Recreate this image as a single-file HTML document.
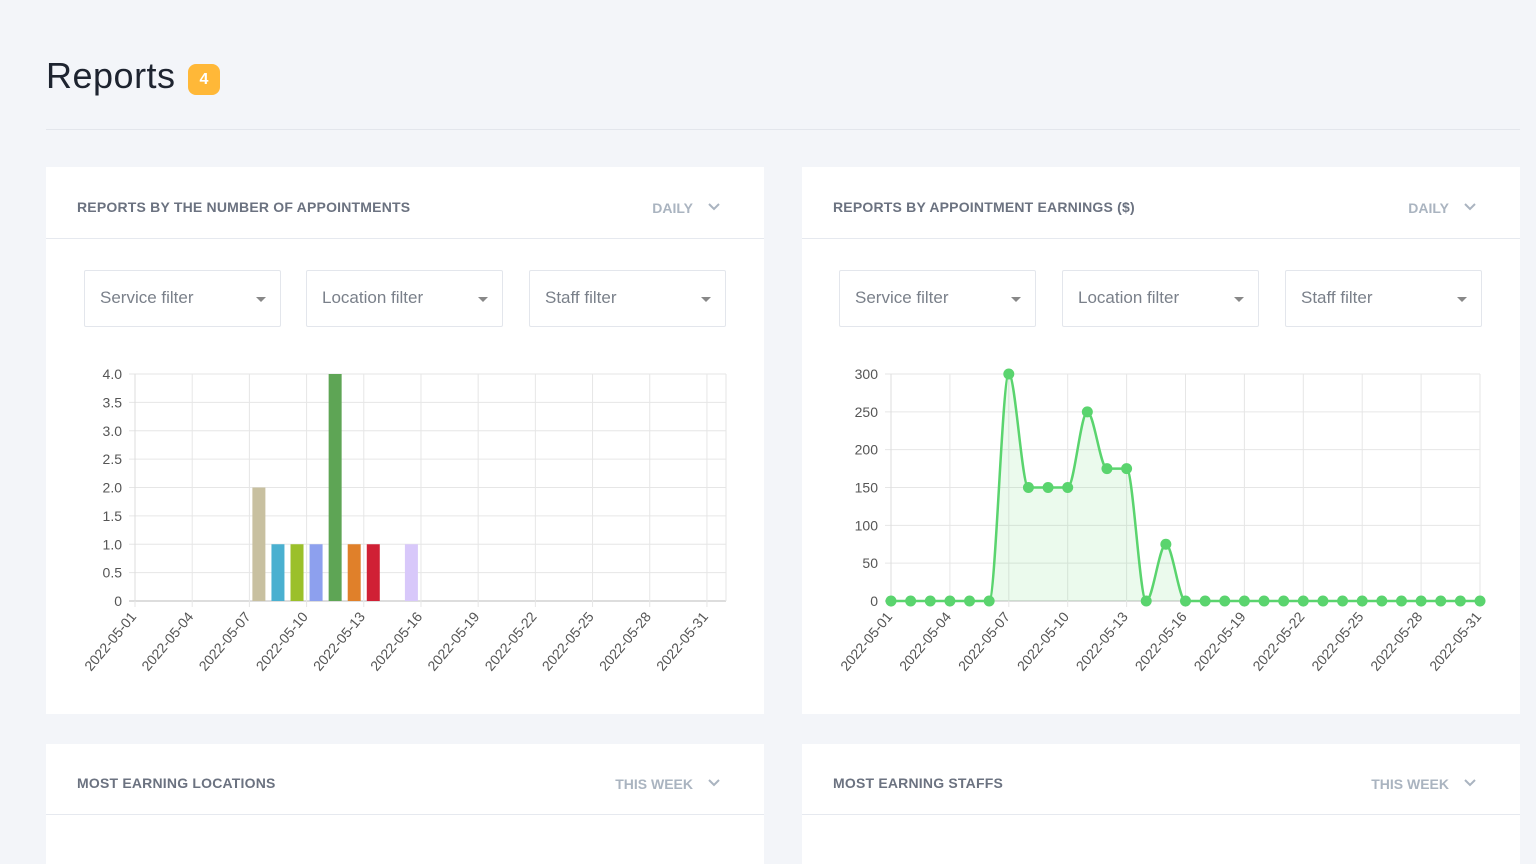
<!DOCTYPE html>
<html><head><meta charset="utf-8"><style>
*{box-sizing:border-box;margin:0;padding:0}
body{width:1536px;height:842px;overflow:hidden;background:#f3f5f9;font-family:"Liberation Sans",sans-serif;position:relative}
h1{position:absolute;left:46px;top:55px;font-weight:400;font-size:36px;color:#1e2430;letter-spacing:0.5px}
.badge{position:absolute;left:188px;top:64px;width:32px;height:31px;background:#ffb838;border-radius:8px;color:#fff;font-size:16px;font-weight:700;text-align:center;line-height:31px}
.hr{position:absolute;left:46px;right:16px;top:129px;height:1px;background:#e3e6ec}
.card{position:absolute;background:#fff;width:718px}
.ch{height:72px;border-bottom:1px solid #e6e9ef;position:relative}
.ct{position:absolute;left:31px;top:32px;font-size:14px;font-weight:700;color:#6b7280;letter-spacing:0.2px}
.cd{position:absolute;right:71px;top:33px;font-size:14px;font-weight:700;color:#aab4c0}
.cd svg{position:absolute;right:-28px;top:0}
.sel{position:absolute;top:103px;width:197px;height:57px;border:1px solid #e3e6ec;border-radius:2px;font-size:17px;color:#7a808a;padding:17px 0 0 15px}
.sel:after{content:"";position:absolute;right:14px;top:26px;border:5px solid transparent;border-top:5px solid #888;border-bottom:0}
svg text{font-family:"Liberation Sans",sans-serif;font-size:14px;fill:#555}
</style></head><body>
<h1>Reports</h1><div class="badge">4</div><div class="hr"></div>

<div class="card" style="left:46px;top:167px;height:547px">
<div class="ch"><div class="ct">REPORTS BY THE NUMBER OF APPOINTMENTS</div><div class="cd">DAILY<svg width="14" height="14" viewBox="0 0 14 14"><path d="M2 4l5 5 5-5" fill="none" stroke="#aab4c0" stroke-width="2"/></svg></div></div>
<div class="sel" style="left:38px">Service filter</div>
<div class="sel" style="left:260px">Location filter</div>
<div class="sel" style="left:483px">Staff filter</div>
</div>

<div class="card" style="left:802px;top:167px;height:547px">
<div class="ch"><div class="ct">REPORTS BY APPOINTMENT EARNINGS ($)</div><div class="cd">DAILY<svg width="14" height="14" viewBox="0 0 14 14"><path d="M2 4l5 5 5-5" fill="none" stroke="#aab4c0" stroke-width="2"/></svg></div></div>
<div class="sel" style="left:37px">Service filter</div>
<div class="sel" style="left:260px">Location filter</div>
<div class="sel" style="left:483px">Staff filter</div>
</div>

<div class="card" style="left:46px;top:744px;height:120px">
<div class="ch" style="height:71px"><div class="ct" style="top:31px">MOST EARNING LOCATIONS</div><div class="cd" style="top:32px">THIS WEEK<svg width="14" height="14" viewBox="0 0 14 14"><path d="M2 4l5 5 5-5" fill="none" stroke="#aab4c0" stroke-width="2"/></svg></div></div></div>
<div class="card" style="left:802px;top:744px;height:120px">
<div class="ch" style="height:71px"><div class="ct" style="top:31px">MOST EARNING STAFFS</div><div class="cd" style="top:32px">THIS WEEK<svg width="14" height="14" viewBox="0 0 14 14"><path d="M2 4l5 5 5-5" fill="none" stroke="#aab4c0" stroke-width="2"/></svg></div></div></div>

<svg id="c" width="1536" height="842" style="position:absolute;left:0;top:0"></svg>
<script>
var s='';
function grid(x0,x1,y0,y1,ny,labels,lx,dayW,off){
 for(var i=0;i<=ny;i++){var y=y0+(y1-y0)*i/ny;s+='<line x1="'+(x0-6)+'" x2="'+x1+'" y1="'+y+'" y2="'+y+'" stroke="'+(i==ny?'#bbb':'#e6e6e6')+'"/>';
 s+='<text x="'+lx+'" y="'+(y+5)+'" text-anchor="end">'+labels[i]+'</text>';}
 for(var d=0;d<=30;d+=3){var x=x0+off+d*dayW;s+='<line x1="'+x+'" x2="'+x+'" y1="'+y0+'" y2="'+(y1+6)+'" stroke="#e6e6e6"/>';
  var lab='2022-05-'+String(d+1).padStart(2,'0');
  s+='<text transform="translate('+(x+2)+','+(y1+16)+') rotate(-50)" text-anchor="end">'+lab+'</text>';}
 s+='<line x1="'+x0+'" x2="'+x0+'" y1="'+y0+'" y2="'+y1+'" stroke="#ddd"/><line x1="'+x1+'" x2="'+x1+'" y1="'+y0+'" y2="'+y1+'" stroke="#e6e6e6"/>';
}
var W1=591/31;
grid(135,726,374,601,8,['4.0','3.5','3.0','2.5','2.0','1.5','1.0','0.5','0'],122,W1*1,0);
var bars=[[7,2,'#c8c0a0'],[8,1,'#4ab0d0'],[9,1,'#9bc02a'],[10,1,'#8da0ee'],[11,4,'#5ea555'],[12,1,'#e0802a'],[13,1,'#d02035'],[15,1,'#d8c8fa']];
bars.forEach(function(b){var x=135+(b[0]-1)*W1+3;var h=b[1]*227/4;s+='<rect x="'+x+'" y="'+(601-h)+'" width="13" height="'+h+'" fill="'+b[2]+'"/>';});
var x0=891,W2=589/30;
grid(891,1480,374,601,6,['300','250','200','150','100','50','0'],878,W2,0);
var v=[0,0,0,0,0,0,300,150,150,150,250,175,175,0,75];while(v.length<31)v.push(0);
var P=v.map(function(a,i){return [x0+i*W2,601-a*227/300];});
var n=P.length,dl=[],m=[];
for(var i=0;i<n-1;i++)dl.push((P[i+1][1]-P[i][1])/W2);
for(var i=0;i<n;i++){if(i==0)m.push(dl[0]);else if(i==n-1)m.push(dl[n-2]);else if(dl[i-1]*dl[i]<=0)m.push(0);else m.push((dl[i-1]+dl[i])/2);}
for(var i=0;i<n-1;i++){if(dl[i]==0){m[i]=0;m[i+1]=0;continue;}var a=m[i]/dl[i],b=m[i+1]/dl[i],h=a*a+b*b;if(h>9){var t=3/Math.sqrt(h);m[i]=t*a*dl[i];m[i+1]=t*b*dl[i];}}
var d='M'+P[0][0]+','+P[0][1];
for(var i=0;i<n-1;i++){var dx=W2/3;d+=' C'+(P[i][0]+dx)+','+(P[i][1]+m[i]*dx)+' '+(P[i+1][0]-dx)+','+(P[i+1][1]-m[i+1]*dx)+' '+P[i+1][0]+','+P[i+1][1];}
s+='<path d="'+d+' L1480,601 L891,601Z" fill="rgba(90,210,110,0.12)"/>';
s+='<path d="'+d+'" fill="none" stroke="#5ad46e" stroke-width="2.5"/>';
P.forEach(function(p){s+='<circle cx="'+p[0]+'" cy="'+p[1]+'" r="5.5" fill="#5ad46e"/>';});
document.getElementById('c').innerHTML=s;
</script>
</body></html>
